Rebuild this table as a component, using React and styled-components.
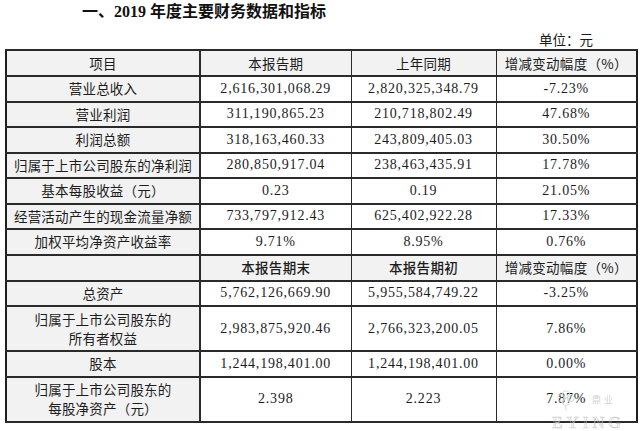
import React from 'react';
import styled, { createGlobalStyle } from 'styled-components';

const GlobalStyle = createGlobalStyle`
  html, body {
    margin: 0;
    padding: 0;
    background: #fff;
  }
  body {
    font-family: "Noto Sans CJK SC", sans-serif;
    color: #1c1c1c;
  }
`;

const topRows = [
  { label: '营业总收入', cur: '2,616,301,068.29', prev: '2,820,325,348.79', diff: '-7.23%' },
  { label: '营业利润', cur: '311,190,865.23', prev: '210,718,802.49', diff: '47.68%' },
  { label: '利润总额', cur: '318,163,460.33', prev: '243,809,405.03', diff: '30.50%' },
  { label: '归属于上市公司股东的净利润', cur: '280,850,917.04', prev: '238,463,435.91', diff: '17.78%' },
  { label: '基本每股收益（元）', cur: '0.23', prev: '0.19', diff: '21.05%' },
  { label: '经营活动产生的现金流量净额', cur: '733,797,912.43', prev: '625,402,922.28', diff: '17.33%' },
  { label: '加权平均净资产收益率', cur: '9.71%', prev: '8.95%', diff: '0.76%' },
];

const bottomRows = [
  { label: ['总资产'], cur: '5,762,126,669.90', prev: '5,955,584,749.22', diff: '-3.25%' },
  { label: ['归属于上市公司股东的', '所有者权益'], cur: '2,983,875,920.46', prev: '2,766,323,200.05', diff: '7.86%' },
  { label: ['股本'], cur: '1,244,198,401.00', prev: '1,244,198,401.00', diff: '0.00%' },
  { label: ['归属于上市公司股东的', '每股净资产（元）'], cur: '2.398', prev: '2.223', diff: '7.87%' },
];

const App = () => {
  return (
    <>
      <GlobalStyle />
      <Page>
        <Title>一、2019 年度主要财务数据和指标</Title>
        <Unit>单位：元</Unit>
        <Table>
          <colgroup>
            <col style={{ width: 194 }} />
            <col style={{ width: 151 }} />
            <col style={{ width: 145 }} />
            <col style={{ width: 141 }} />
          </colgroup>
          <tbody>
            <HeadRow>
              <LabelCell>项目</LabelCell>
              <HeadCell>本报告期</HeadCell>
              <HeadCell>上年同期</HeadCell>
              <HeadCell>增减变动幅度（%）</HeadCell>
            </HeadRow>
            {topRows.map((r) => (
              <Row key={r.label}>
                <LabelCell>{r.label}</LabelCell>
                <NumCell>{r.cur}</NumCell>
                <NumCell>{r.prev}</NumCell>
                <NumCell>{r.diff}</NumCell>
              </Row>
            ))}
            <HeadRow>
              <LabelCell />
              <HeadCell $strong>本报告期末</HeadCell>
              <HeadCell $strong>本报告期初</HeadCell>
              <HeadCell>增减变动幅度（%）</HeadCell>
            </HeadRow>
            {bottomRows.map((r) => (
              <Row key={r.label.join('')} $tall={r.label.length > 1}>
                <LabelCell>
                  {r.label.map((line) => (
                    <Line key={line}>{line}</Line>
                  ))}
                </LabelCell>
                <NumCell>{r.cur}</NumCell>
                <NumCell>{r.prev}</NumCell>
                <NumCell>{r.diff}</NumCell>
              </Row>
            ))}
          </tbody>
        </Table>
        <Watermark>
          <svg width="20" height="24" viewBox="0 0 22 26" fill="none" stroke="#dadada" strokeWidth="1">
            <circle cx="11" cy="8" r="4" />
            <circle cx="6" cy="12" r="4" />
            <circle cx="16" cy="12" r="4" />
            <circle cx="11" cy="16" r="4" />
            <path d="M11 20 C 10 23, 12 24, 11 26" />
          </svg>
          <MarkSmall>鼎业</MarkSmall>
          <MarkLetters>EYING</MarkLetters>
        </Watermark>
      </Page>
    </>
  );
};

// Styled Components

const Page = styled.div`
  position: relative;
  width: 640px;
  height: 431px;
  overflow: hidden;
  background: #fff;
`;

const Title = styled.div`
  padding: 2px 0 0 82px;
  height: 20px;
  font-size: 16px;
  line-height: 20px;
  font-weight: 700;
  color: #111;
  font-family: "Liberation Serif", "Noto Sans CJK SC", serif;
`;

const Unit = styled.div`
  margin-top: 8px;
  padding-right: 47px;
  text-align: right;
  font-size: 13.5px;
  line-height: 18px;
  color: #1a1a1a;
`;

const Table = styled.table`
  margin: 1px 0 0 5px;
  width: 631px;
  table-layout: fixed;
  border-collapse: collapse;
  border: 2px solid #1e1e1e;
`;

const Row = styled.tr`
  height: ${({ $tall }) => ($tall ? '45px' : '25.5px')};
`;

const HeadRow = styled.tr`
  height: 26px;
  background: #f2f2f2;
`;

const Cell = styled.td`
  padding: 0;
  text-align: center;
  vertical-align: middle;
  border-top: 2px solid #2a2a2a;
  border-bottom: 2px solid #2a2a2a;
  border-left: 1px solid #2a2a2a;
  border-right: 1px solid #2a2a2a;
  color: #1c1c1c;
  white-space: nowrap;
`;

const LabelCell = styled(Cell)`
  background: #f2f2f2;
  border-right: 2px solid #2a2a2a;
  font-size: 13.5px;
  line-height: 19px;
  letter-spacing: 0.2px;
`;

const HeadCell = styled(Cell)`
  font-size: 13.5px;
  line-height: 19px;
  letter-spacing: 0.3px;
  font-weight: ${({ $strong }) => ($strong ? 500 : 400)};
`;

const NumCell = styled(Cell)`
  font-family: "Liberation Serif", "Noto Sans CJK SC", serif;
  font-size: 14px;
  letter-spacing: 0.8px;
`;

const Line = styled.div`
  line-height: 19px;
`;

const Watermark = styled.div`
  position: absolute;
  right: 4px;
  bottom: 0;
  width: 84px;
  height: 44px;
  pointer-events: none;

  svg {
    position: absolute;
    left: 4px;
    top: 0;
  }
`;

const MarkSmall = styled.span`
  position: absolute;
  left: 40px;
  top: 8px;
  font-size: 9px;
  line-height: 10px;
  letter-spacing: 3px;
  color: rgba(205, 205, 205, 0.9);
`;

const MarkLetters = styled.span`
  position: absolute;
  left: 0;
  bottom: 0;
  font-family: "Liberation Serif", serif;
  font-size: 17px;
  line-height: 17px;
  letter-spacing: 4px;
  color: transparent;
  -webkit-text-stroke: 0.6px rgba(190, 190, 190, 0.8);
`;

export default App;
